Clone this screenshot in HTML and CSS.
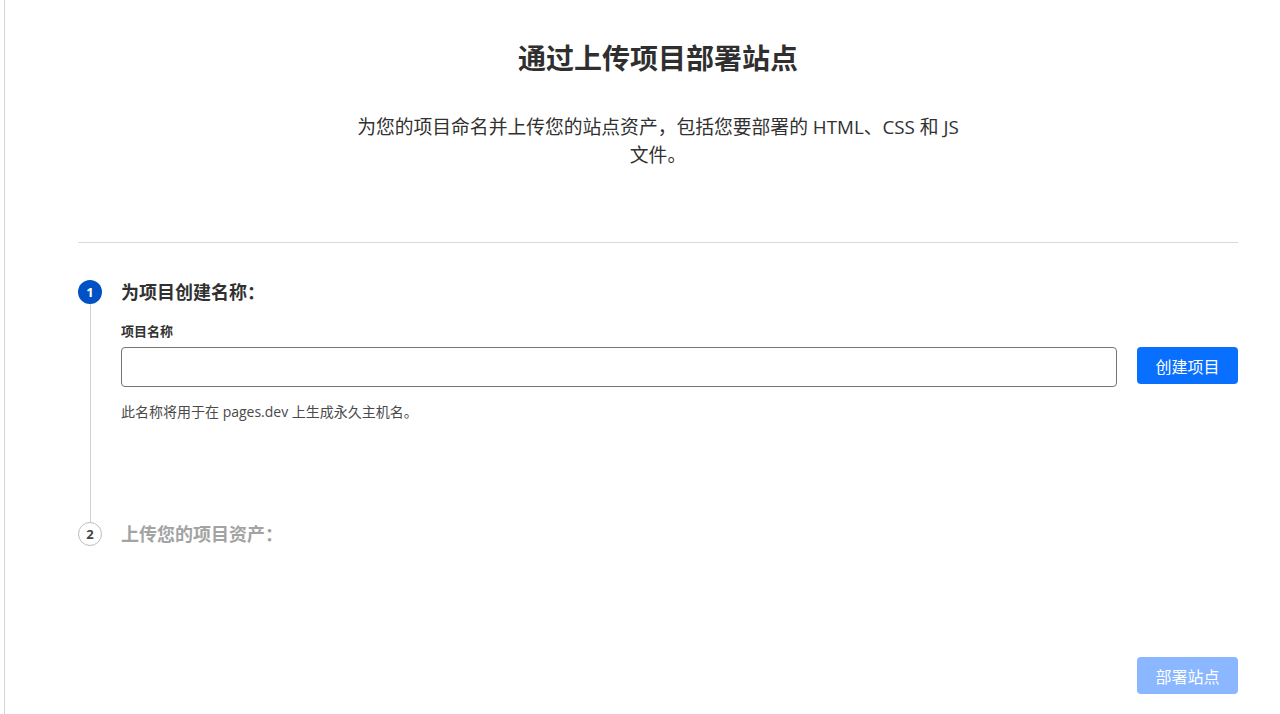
FILE: index.html
```html
<!DOCTYPE html>
<html lang="zh-CN">
<head>
<meta charset="utf-8">
<title>通过上传项目部署站点</title>
<link rel="stylesheet" href="styles.css">
</head>
<body>
<div class="frame">
  <main class="page">
    <header class="intro">
      <h1 class="title">通过上传项目部署站点</h1>
      <p class="subtitle">为您的项目命名并上传您的站点资产，包括您要部署的 HTML、CSS 和 JS 文件。</p>
    </header>
    <hr class="divider">
    <section class="steps">
      <div class="step step-active">
        <div class="rail">
          <span class="badge badge-active">1</span>
          <span class="rail-line"></span>
        </div>
        <div class="step-body step-body-first">
          <h2 class="step-title">为项目创建名称：</h2>
          <label class="field-label" for="pname">项目名称</label>
          <div class="field-row">
            <input id="pname" class="text-input" type="text">
            <button class="btn btn-primary" type="button">创建项目</button>
          </div>
          <p class="hint">此名称将用于在 pages.dev 上生成永久主机名。</p>
        </div>
      </div>
      <div class="step">
        <div class="rail">
          <span class="badge badge-idle">2</span>
        </div>
        <div class="step-body">
          <h2 class="step-title step-title-idle">上传您的项目资产：</h2>
        </div>
      </div>
    </section>
    <div class="footer">
      <button class="btn btn-disabled" type="button">部署站点</button>
    </div>
  </main>
</div>
</body>
</html>
```

FILE: styles.css
```css
* { box-sizing: border-box; }
html, body {
  margin: 0;
  padding: 0;
  background: #fff;
}
body {
  font-family: "Open Sans", "Noto Sans CJK SC", sans-serif;
  color: #313131;
}
.frame {
  margin-left: 4px;
  border-left: 1px solid #d6d6d6;
  min-height: 714px;
}
.page {
  padding: 40px 42px 0 73px;
}
.intro {
  display: flex;
  flex-direction: column;
  align-items: center;
  text-align: center;
}
.title {
  margin: 0;
  font-size: 28px;
  line-height: 36px;
  font-weight: 700;
  color: #2f2f2f;
}
.subtitle {
  margin: 37px 0 0;
  max-width: 612px;
  font-size: 18.8px;
  line-height: 28px;
  color: #313131;
}
.divider {
  margin: 73px 0 0;
  border: 0;
  border-top: 1px solid #d9d9d9;
  height: 0;
}
.steps {
  margin-top: 37px;
}
.step {
  display: flex;
  gap: 19px;
}
.rail {
  width: 24px;
  flex: none;
  display: flex;
  flex-direction: column;
  align-items: center;
}
.badge {
  width: 24px;
  height: 24px;
  border-radius: 50%;
  display: flex;
  align-items: center;
  justify-content: center;
  font-size: 13px;
  font-weight: 700;
  line-height: 1;
  flex: none;
}
.badge-active {
  background: #0051c3;
  color: #fff;
}
.badge-idle {
  background: #fff;
  border: 1px solid #bdbdbd;
  color: #444;
}
.rail-line {
  flex: 1;
  width: 1px;
  background: #d0d0d0;
}
.step-body {
  flex: 1;
  min-width: 0;
}
.step-body-first {
  padding-bottom: 100px;
}
.step-title {
  margin: 0;
  font-size: 18px;
  line-height: 24px;
  font-weight: 700;
  color: #313131;
}
.step-title-idle {
  color: #a3a3a3;
}
.field-label {
  display: block;
  margin-top: 17px;
  font-size: 13px;
  line-height: 20px;
  font-weight: 700;
  color: #313131;
}
.field-row {
  display: flex;
  align-items: flex-start;
  gap: 20px;
  margin-top: 6px;
}
.text-input {
  flex: 1;
  height: 40px;
  border: 1px solid #747474;
  border-radius: 4px;
  padding: 0 10px;
  font: inherit;
  font-size: 14px;
  background: #fff;
}
.btn {
  width: 101px;
  height: 37px;
  border: 0;
  border-radius: 4px;
  font-family: "Open Sans", "Noto Sans CJK SC", sans-serif;
  font-size: 16px;
  color: #fff;
  padding: 0;
  flex: none;
}
.btn-primary {
  background: #086fff;
}
.btn-disabled {
  background: #8ab7ff;
}
.hint {
  margin: 15px 0 0;
  font-size: 14px;
  line-height: 20px;
  color: #4a4a4a;
}
.footer {
  display: flex;
  justify-content: flex-end;
  margin-top: 111px;
}
```
